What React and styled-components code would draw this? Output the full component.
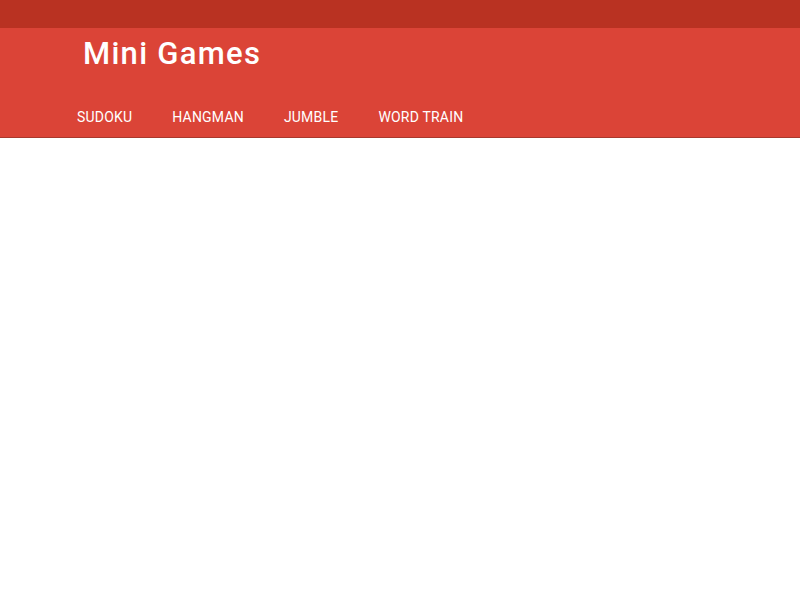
import React from "react";
import styled, { createGlobalStyle } from "styled-components";

const GlobalStyle = createGlobalStyle`
  html, body {
    margin: 0;
    padding: 0;
    background: #ffffff;
    font-family: Roboto, "Noto Sans", sans-serif;
  }
`;

const tabs = ["Sudoku", "Hangman", "Jumble", "Word Train"];

const App = () => {
  return (
    <>
      <GlobalStyle />
      <Header>
        <StatusBar />
        <Toolbar>
          <Title>Mini Games</Title>
        </Toolbar>
        <Tabs>
          {tabs.map((tab) => (
            <Tab key={tab}>{tab}</Tab>
          ))}
        </Tabs>
      </Header>
    </>
  );
};

export default App;

const Header = styled.header`
  display: flex;
  flex-direction: column;
  background-color: #db4437;
  border-bottom: 1px solid #a8392d;
`;

const StatusBar = styled.div`
  height: 28px;
  background-color: #b93222;
`;

const Toolbar = styled.div`
  display: flex;
  align-items: flex-start;
  box-sizing: border-box;
  height: 64px;
  padding: 10px 0 0 83px;
`;

const Title = styled.h1`
  margin: 0;
  font-size: 31px;
  line-height: 1;
  font-weight: 500;
  color: #ffffff;
  letter-spacing: 1.3px;
`;

const Tabs = styled.nav`
  display: flex;
  align-items: flex-start;
  gap: 40px;
  box-sizing: border-box;
  height: 45px;
  padding: 18px 0 0 77px;
`;

const Tab = styled.div`
  font-size: 14px;
  line-height: 1;
  font-weight: 400;
  text-transform: uppercase;
  letter-spacing: 0.2px;
  color: #ffffff;
  cursor: pointer;
`;
